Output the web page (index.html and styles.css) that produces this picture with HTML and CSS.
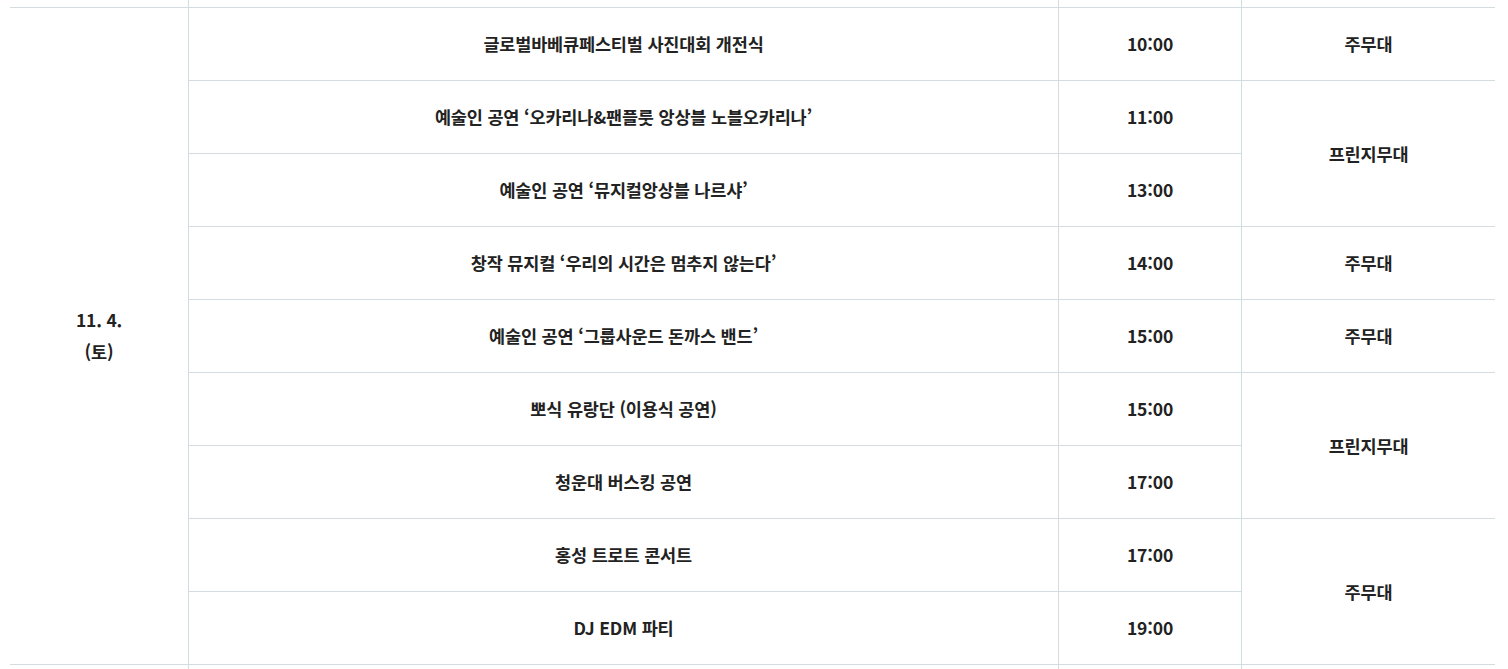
FILE: index.html
```html
<!DOCTYPE html>
<html lang="ko">
<head>
<meta charset="utf-8">
<title>행사 일정</title>
<link rel="stylesheet" href="styles.css">
</head>
<body>
<div class="wrap">
<table class="schedule">
  <colgroup>
    <col class="c-date">
    <col class="c-title">
    <col class="c-time">
    <col class="c-place">
  </colgroup>
  <tbody>
    <tr class="partial-top">
      <td class="date"></td><td></td><td></td><td></td>
    </tr>
    <tr>
      <td class="date" rowspan="9">11. 4.<br>(토)</td>
      <td>글로벌바베큐페스티벌 사진대회 개전식</td>
      <td>10:00</td>
      <td>주무대</td>
    </tr>
    <tr>
      <td>예술인 공연 ‘오카리나&amp;팬플룻 앙상블 노블오카리나’</td>
      <td>11:00</td>
      <td rowspan="2">프린지무대</td>
    </tr>
    <tr>
      <td>예술인 공연 ‘뮤지컬앙상블 나르샤’</td>
      <td>13:00</td>
    </tr>
    <tr>
      <td>창작 뮤지컬 ‘우리의 시간은 멈추지 않는다’</td>
      <td>14:00</td>
      <td>주무대</td>
    </tr>
    <tr>
      <td>예술인 공연 ‘그룹사운드 돈까스 밴드’</td>
      <td>15:00</td>
      <td>주무대</td>
    </tr>
    <tr>
      <td>뽀식 유랑단 (이용식 공연)</td>
      <td>15:00</td>
      <td rowspan="2">프린지무대</td>
    </tr>
    <tr>
      <td>청운대 버스킹 공연</td>
      <td>17:00</td>
    </tr>
    <tr>
      <td>홍성 트로트 콘서트</td>
      <td>17:00</td>
      <td rowspan="2">주무대</td>
    </tr>
    <tr>
      <td>DJ EDM 파티</td>
      <td>19:00</td>
    </tr>
    <tr class="row">
      <td class="date"></td><td></td><td></td><td></td>
    </tr>
  </tbody>
</table>
</div>
</body>
</html>
```

FILE: styles.css
```css
html, body {
  margin: 0;
  padding: 0;
  background: #fff;
}

.wrap {
  padding-left: 10px;
}

.schedule {
  width: 1485px;
  table-layout: fixed;
  border-collapse: separate;
  border-spacing: 0;
  font-family: "Noto Sans CJK KR", "Noto Sans", sans-serif;
  font-weight: 700;
  font-size: 17.5px;
  color: #222;
  letter-spacing: -0.01em;
}

.c-date { width: 178px; }
.c-title { width: 870px; }
.c-time { width: 183px; }
.c-place { width: 254px; }

.schedule td {
  box-sizing: border-box;
  height: 73px;
  padding: 0;
  text-align: center;
  vertical-align: middle;
  border-bottom: 1px solid #d3dce1;
  border-left: 1px solid #d3dce1;
  line-height: 24px;
}

.schedule td.date {
  border-left: none;
  line-height: 32px;
}

.schedule tr.partial-top td {
  height: 8px;
}
```
